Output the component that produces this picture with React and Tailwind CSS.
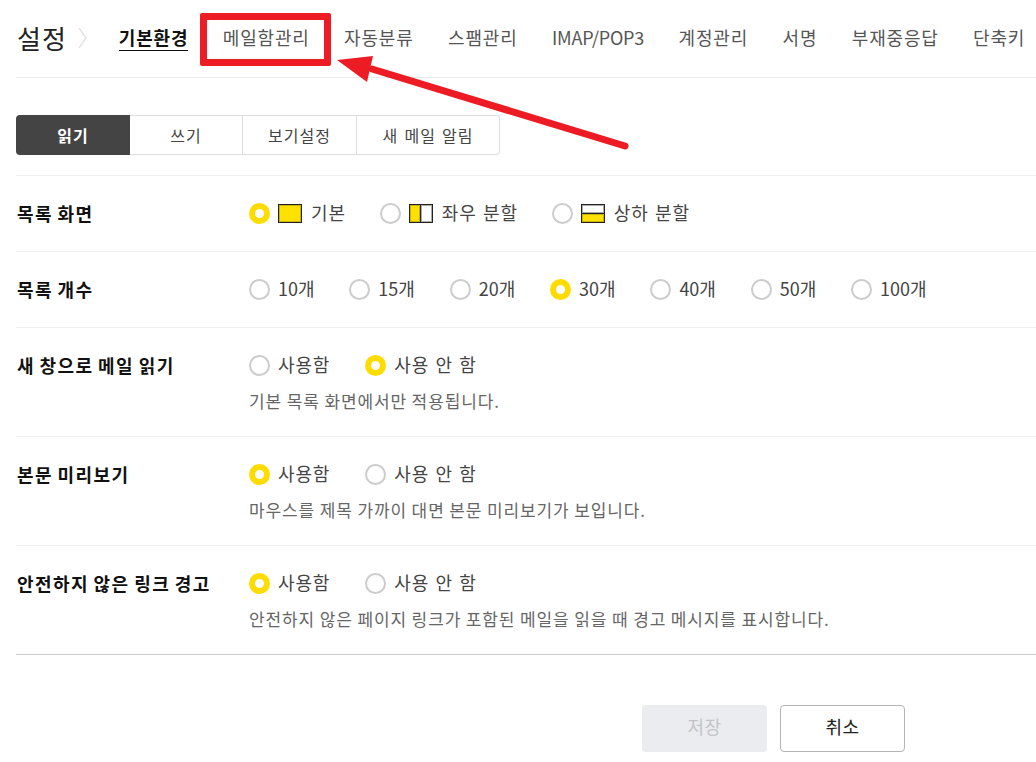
const navItems = ["메일함관리", "자동분류", "스팸관리", "IMAP/POP3", "계정관리", "서명", "부재중응답", "단축키"];
const tabs = ["쓰기", "보기설정", "새 메일 알림"];

const Radio = ({ checked }) => (
  <span
    className={`block w-[21px] h-[21px] shrink-0 rounded-full ${
      checked ? "border-[6px] border-[#ffdc00] bg-white" : "border-2 border-[#cccccc] bg-white"
    }`}
  />
);

const ListIcon = ({ type }) => (
  <span className={`flex w-[24px] h-[19px] border border-[#222] bg-white ${type === "rows" ? "flex-col" : ""}`}>
    {type === "full" && <span className="flex-1 bg-[#ffe100] border border-[#c9b200]" />}
    {type === "cols" && (
      <>
        <span className="w-[10px] bg-[#ffe100] border border-[#c9b200]" />
        <span className="w-px bg-[#222]" />
        <span className="flex-1 border border-[#aaa]" />
      </>
    )}
    {type === "rows" && (
      <>
        <span className="h-[8px] border border-[#aaa]" />
        <span className="h-px bg-[#222]" />
        <span className="flex-1 bg-[#ffe100] border border-[#c9b200]" />
      </>
    )}
  </span>
);

const Option = ({ label, checked, icon, gap, numeric }) => (
  <label className={`flex items-center ${gap}`}>
    <Radio checked={checked} />
    {icon && <span className="ml-2"><ListIcon type={icon} /></span>}
    <span
      className={`pb-px text-[18px] [word-spacing:1.5px] text-[#444] ${numeric ? "" : "tracking-[0.85px]"} ${
        icon ? "ml-[9px]" : "ml-2"
      }`}
    >
      {label}
    </span>
  </label>
);

const Row = ({ label, options, note, height }) => (
  <div className={`flex border-t border-[#f0f0f0] ${height}`}>
    <div className="w-[233px] shrink-0 pl-px pt-[21px] text-[18px] leading-[32px] font-bold text-[#111] tracking-[1.45px] [word-spacing:-1px]">{label}</div>
    <div className="pt-[21px]">
      <div className="flex h-[32px] items-center whitespace-nowrap">
        {options.map((o) => (
          <Option key={o.label} {...o} />
        ))}
      </div>
      {note && <p className="mt-[8px] text-[17px] leading-[24px] text-[#666] tracking-[0.87px] whitespace-nowrap">{note}</p>}
    </div>
  </div>
);

const useOpts = (on) => [
  { label: "사용함", checked: on, gap: "mr-[35px]" },
  { label: "사용 안 함", checked: !on },
];

export default function App() {
  return (
    <div className="relative w-[1036px] h-[762px] overflow-hidden bg-white font-['Noto_Sans_CJK_KR','Noto_Sans',sans-serif]">
      <div className="pl-4">
        <div className="flex h-[78px] items-center border-b border-[#e9e9e9] whitespace-nowrap pb-[2px]">
          <h1 className="pl-px text-[26px] font-normal text-[#222] tracking-[1px]">설정</h1>
          <svg className="ml-[11px] mr-[31px]" width="10" height="22" viewBox="0 0 10 22" fill="none" stroke="#e3e3e3" strokeWidth="1.4">
            <path d="M1 1l7 10-7 10" />
          </svg>
          <div className="flex gap-[34.5px] text-[18px] tracking-[0.8px] text-[#555]">
            <span className="font-bold text-[#111] border-b-[1.5px] border-[#111] leading-[25px]">기본환경</span>
            {navItems.map((item) => (
              <span key={item} className={`leading-[25px] ${item === "IMAP/POP3" ? "tracking-[-0.2px]" : ""}`}>{item}</span>
            ))}
          </div>
        </div>

        <div className="flex w-[484px] h-[40px] mt-[37px] mb-[20px] text-[16px] tracking-[1px] [word-spacing:1.5px]">
          <div className="flex w-[114px] pb-px items-center justify-center rounded-l bg-[#444] font-bold text-white">읽기</div>
          <div className="flex flex-1 rounded-r border border-l-0 border-[#ddd] text-[#444]">
            {tabs.map((tab, i) => (
              <div key={tab} className={`flex pb-px items-center justify-center ${i === 0 ? "w-[112px]" : i === 1 ? "w-[115px] border-x border-[#ddd]" : "flex-1"}`}>
                {tab}
              </div>
            ))}
          </div>
        </div>

        <Row
          label="목록 화면"
          height="h-[76px]"
          options={[
            { label: "기본", checked: true, icon: "full", gap: "mr-[34px]" },
            { label: "좌우 분할", icon: "cols", gap: "mr-[34px]" },
            { label: "상하 분할", icon: "rows" },
          ]}
        />
        <Row
          label="목록 개수"
          height="h-[76px]"
          options={["10개", "15개", "20개", "30개", "40개", "50개", "100개"].map((label) => ({
            label,
            numeric: true,
            checked: label === "30개",
            gap: "mr-[34.8px]",
          }))}
        />
        <Row label="새 창으로 메일 읽기" height="h-[109px]" options={useOpts(false)} note="기본 목록 화면에서만 적용됩니다." />
        <Row label="본문 미리보기" height="h-[109px]" options={useOpts(true)} note="마우스를 제목 가까이 대면 본문 미리보기가 보입니다." />
        <Row label="안전하지 않은 링크 경고" height="h-[109px]" options={useOpts(true)} note="안전하지 않은 페이지 링크가 포함된 메일을 읽을 때 경고 메시지를 표시합니다." />

        <div className="border-t border-[#ccc] flex pl-[626px] gap-[13px] pt-[50px] text-[18px] tracking-[0.4px]">
          <button className="w-[125px] h-[47px] pb-1 rounded bg-[#ebecef] text-[#c4c4c4]">저장</button>
          <button className="w-[125px] h-[47px] pb-1 rounded border border-[#b5b5b5] bg-white text-[#222]">취소</button>
        </div>
      </div>

      {/* 빨간 강조 표시 */}
      <div className="absolute left-[200px] top-[13px] w-[131px] h-[53px] rounded-[2px] border-[7px] border-[#ed1c24]" />
      <svg className="absolute left-0 top-0 pointer-events-none" width="1036" height="762" fill="none">
        <path d="M372 69L625 146" stroke="#ed1c24" strokeWidth="7" strokeLinecap="round" />
        <path d="M337 60L373 56L367 82Z" fill="#ed1c24" />
      </svg>
    </div>
  );
}
